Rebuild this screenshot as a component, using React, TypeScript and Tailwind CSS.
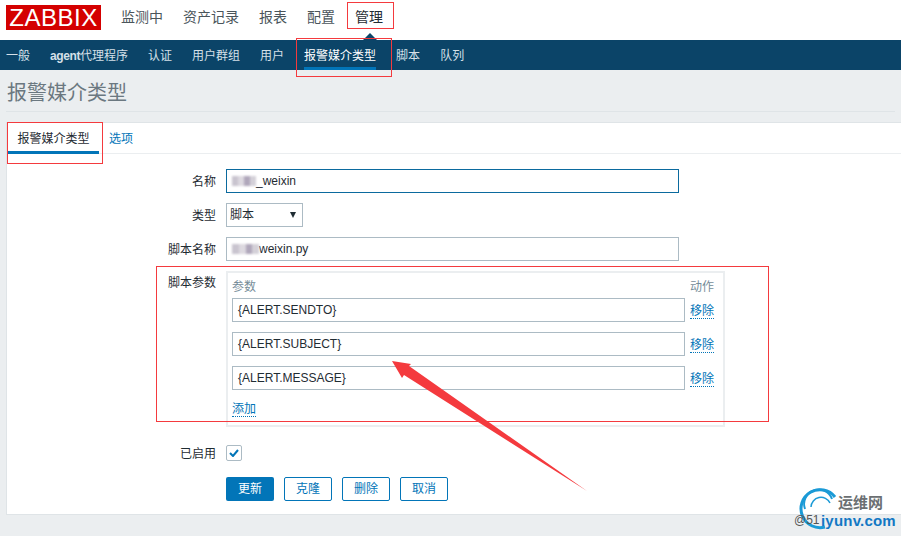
import type { ReactNode } from "react"

function Blur({ w }: { w: number }) {
  return (
    <span className="inline-flex h-[12px] items-center overflow-hidden blur-[1px]" style={{ width: w }}>
      <span className="h-[10px] w-1/4 bg-[#c9c4cf]" />
      <span className="h-[10px] w-1/4 bg-[#ddd9e0]" />
      <span className="h-[10px] w-1/4 bg-[#b0a7bb]" />
      <span className="h-[10px] w-1/4 bg-[#d4d0d8]" />
    </span>
  )
}

function FormRow({ label, children, alignTop }: { label: string; children: ReactNode; alignTop?: boolean }) {
  return (
    <div className={`flex gap-[10px] ${alignTop ? "items-start" : "items-center"}`}>
      <div className={`w-[209px] text-right text-[12px] text-[#1f2c33] ${alignTop ? "pt-[3px]" : "pt-[2px]"}`}>{label}</div>
      {children}
    </div>
  )
}

function ParamRow({ value }: { value: string }) {
  return (
    <div className="flex h-[24px] items-center gap-[5px]">
      <div className="flex h-[24px] w-[453px] items-center border border-[#acbbc4] px-[5px] text-[12px] text-[#1f2c33]">{value}</div>
      <a className="mt-[2px] border-b border-dotted border-[#0275b8] text-[12px] leading-[14px] text-[#0275b8]">移除</a>
    </div>
  )
}

function SubNavItem({ children, active }: { children: ReactNode; active?: boolean }) {
  return (
    <div className={`flex h-[30px] items-center border-b-[3px] pt-[5px] text-[12px] ${active ? "border-[#0275b8] text-white" : "border-transparent text-[#d5e0e8]"}`}>
      {children}
    </div>
  )
}

function OutlineButton({ label }: { label: string }) {
  return (
    <button className="flex h-[24px] w-[48px] items-center justify-center rounded-[2px] border border-[#0275b8] text-[12px] text-[#0275b8]">
      {label}
    </button>
  )
}

export default function App() {
  return (
    <div className="relative h-[536px] w-[901px] overflow-hidden bg-[#ebeef0] font-['Liberation_Sans','Noto_Sans_CJK_SC',sans-serif]">
      {/* top menu */}
      <div className="relative flex h-[40px] items-center bg-white pb-[10px] pl-[6px] pt-[5px]">
        <div className="flex h-[25px] w-[95px] items-center justify-center bg-[#d40000] text-[24px] leading-none tracking-[0.5px] text-white">ZABBIX</div>
        <div className="ml-[20px] flex gap-[20px] text-[14px] text-[#4a555b]">
          <span>监测中</span>
          <span>资产记录</span>
          <span>报表</span>
          <span>配置</span>
          <span className="text-[#1f2c33]">管理</span>
        </div>
        <div className="absolute bottom-0 left-[363px] h-0 w-0 border-x-[7px] border-b-[7px] border-x-transparent border-b-[#0b4468]" />
      </div>

      {/* sub menu */}
      <div className="flex h-[30px] gap-[20px] bg-[#0b4468] pl-[6px]">
        <SubNavItem>一般</SubNavItem>
        <SubNavItem><b className="tracking-[-0.4px]">agent</b>代理程序</SubNavItem>
        <SubNavItem>认证</SubNavItem>
        <SubNavItem>用户群组</SubNavItem>
        <SubNavItem>用户</SubNavItem>
        <SubNavItem active>报警媒介类型</SubNavItem>
        <SubNavItem>脚本</SubNavItem>
        <SubNavItem>队列</SubNavItem>
      </div>

      {/* title */}
      <div className="mx-[6px] flex h-[42px] items-center border-b border-[#dfe4e7] pl-px pt-[4px] text-[20px] text-[#6b7880]">报警媒介类型</div>

      {/* panel */}
      <div className="ml-[6px] mt-[10px] h-[393px] border border-r-0 border-[#dfe4e7] bg-white">
        <div className="flex h-[31px] gap-[10px] border-b border-[#ebeef0] pl-px">
          <div className="flex h-[31px] w-[91px] items-center justify-center border-b-[3px] border-[#0275b8] pt-[3px] text-[12px] text-[#1f2c33]">报警媒介类型</div>
          <div className="flex h-[31px] items-center text-[12px] text-[#0275b8]">选项</div>
        </div>

        <div className="flex flex-col gap-[10px] pt-[15px]">
          <FormRow label="名称">
            <div className="flex h-[24px] w-[453px] items-center border border-[#0b6a9e] px-[5px] text-[12px] text-[#1f2c33]">
              <Blur w={24} />_weixin
            </div>
          </FormRow>
          <FormRow label="类型">
            <div className="flex h-[24px] w-[77px] items-center justify-between border border-[#acbbc4] pl-[3px] pr-[6px] text-[12px] text-[#1f2c33]">
              脚本
              <span className="h-0 w-0 border-x-[3.5px] border-t-[6px] border-x-transparent border-t-[#1f2c33]" />
            </div>
          </FormRow>
          <FormRow label="脚本名称">
            <div className="flex h-[24px] w-[453px] items-center border border-[#acbbc4] px-[5px] text-[12px] text-[#1f2c33]">
              <Blur w={27} />weixin.py
            </div>
          </FormRow>
          <FormRow label="脚本参数" alignTop>
            <div className="flex h-[156px] w-[499px] flex-col border-2 border-[#ebeef0] pl-[4px] pt-[4px]">
              <div className="flex h-[21px] items-center pb-[2px] text-[12px] text-[#768d99]">
                <span className="w-[458px]">参数</span>
                <span>动作</span>
              </div>
              <div className="flex flex-col gap-[10px]">
                <ParamRow value="{ALERT.SENDTO}" />
                <ParamRow value="{ALERT.SUBJECT}" />
                <ParamRow value="{ALERT.MESSAGE}" />
              </div>
              <div className="mt-[6px]">
                <a className="border-b border-dotted border-[#0275b8] text-[12px] leading-[14px] text-[#0275b8]">添加</a>
              </div>
            </div>
          </FormRow>
        </div>

        <div className="mt-[16px]">
          <FormRow label="已启用">
            <div className="flex h-[16px] w-[16px] items-center justify-center rounded-[2px] border border-[#acbbc4]">
              <svg width="10" height="8" viewBox="0 0 10 8" fill="none">
                <path d="M1 4l3 3 5-6" stroke="#0275b8" strokeWidth="2" />
              </svg>
            </div>
          </FormRow>
        </div>

        <div className="ml-[219px] mt-[14px] flex gap-[10px]">
          <button className="flex h-[24px] w-[48px] items-center justify-center rounded-[2px] bg-[#0275b8] text-[12px] text-white">更新</button>
          <OutlineButton label="克隆" />
          <OutlineButton label="删除" />
          <OutlineButton label="取消" />
        </div>
      </div>

      {/* red annotations drawn over the screenshot */}
      <div className="absolute left-[347px] top-[2px] h-[27px] w-[47px] border border-[#f43a3e]" />
      <div className="absolute left-[296px] top-[38px] h-[39px] w-[96px] border border-[#f43a3e]" />
      <div className="absolute left-[7px] top-[122px] h-[42px] w-[96px] border border-[#f43a3e]" />
      <div className="absolute left-[156px] top-[266px] h-[156px] w-[613px] border border-[#f43a3e]" />
      <svg className="absolute left-0 top-0" width="901" height="536" viewBox="0 0 901 536">
        <polygon points="392,361 411,364 409,366 587,491 404,375 402,378" fill="#f43a3e" />
        {/* watermark logo */}
        <path d="M835 497 A19 19 0 1 0 825 527" fill="none" stroke="#1b9ad6" strokeWidth="3" />
        <path d="M832 499 A14 14 0 0 0 805 509" fill="none" stroke="#1b9ad6" strokeWidth="2" />
        <path d="M830 503 A10 10 0 0 0 811 507" fill="none" stroke="#1b9ad6" strokeWidth="1.5" />
      </svg>
      <div className="absolute left-[838px] top-[494px] text-[15px] font-bold leading-[18px] text-[#6b6f72]">运维网</div>
      <div className="absolute left-[794px] top-[513px] text-[12px] leading-[14px] text-[#555]">@51</div>
      <div className="absolute left-[821px] top-[512px] text-[15px] font-bold leading-[17px] tracking-[0.2px] text-[#1278c4]">iyunv.com</div>
    </div>
  )
}
